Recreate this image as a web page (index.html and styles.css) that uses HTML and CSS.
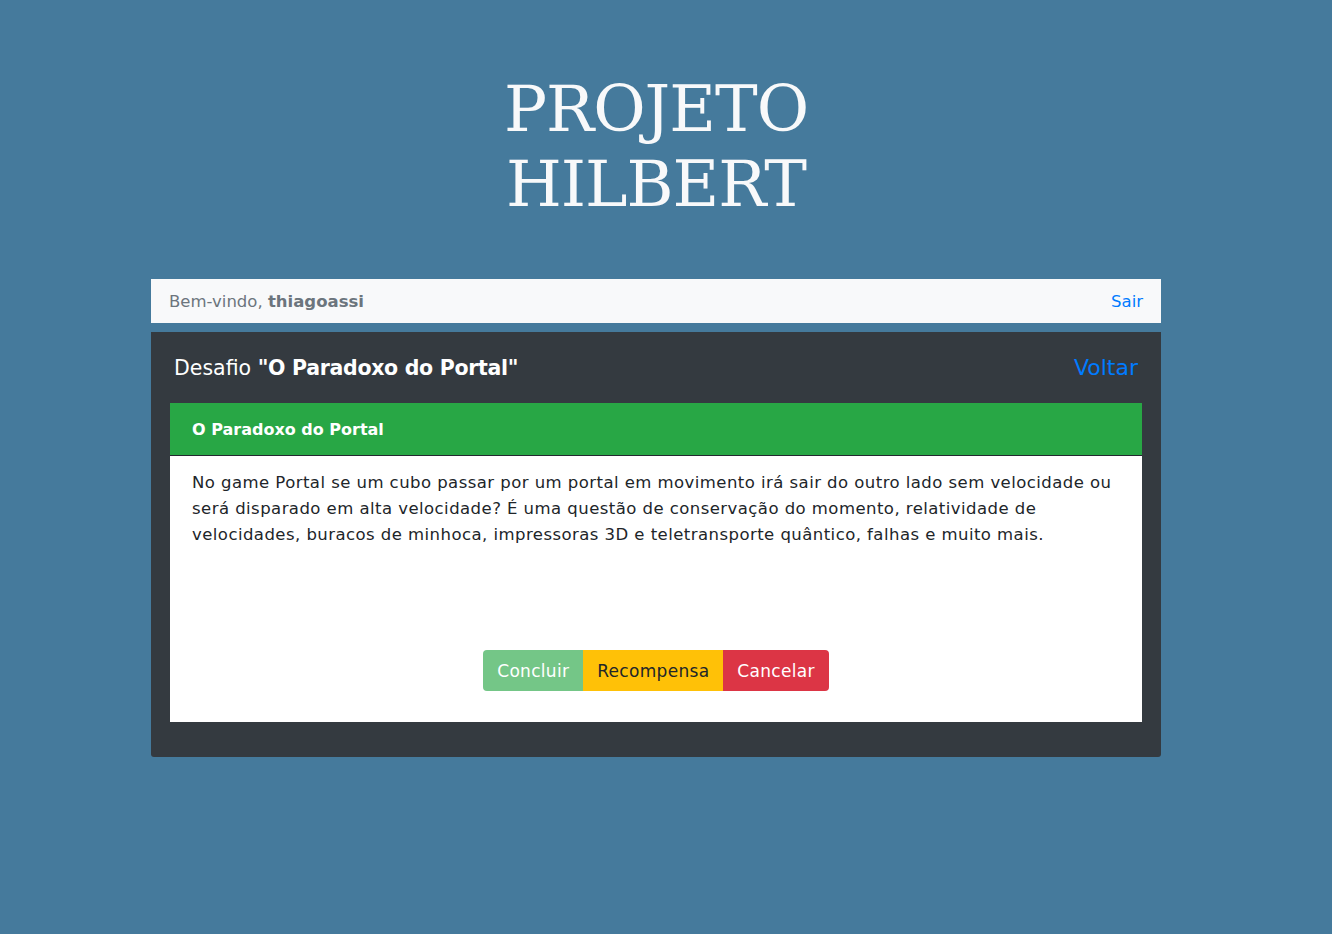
FILE: index.html
```html
<!DOCTYPE html>
<html lang="pt-BR">
<head>
<meta charset="utf-8">
<title>Projeto Hilbert</title>
<link rel="stylesheet" href="styles.css">
</head>
<body>
<header class="brand">
  <h1 class="brand-title">PROJETO<br>HILBERT</h1>
</header>
<main class="wrap">
  <nav class="userbar">
    <span class="welcome">Bem-vindo, <strong>thiagoassi</strong></span>
    <a class="link" href="#">Sair</a>
  </nav>
  <section class="panel">
    <div class="panel-head">
      <h2 class="panel-title">Desafio <strong>"O Paradoxo do Portal"</strong></h2>
      <a class="link link-lg" href="#">Voltar</a>
    </div>
    <article class="card">
      <div class="card-head">O Paradoxo do Portal</div>
      <div class="card-body">
        <p class="card-text">No game Portal se um cubo passar por um portal em movimento irá sair do outro lado sem velocidade ou será disparado em alta velocidade? É uma questão de conservação do momento, relatividade de velocidades, buracos de minhoca, impressoras 3D e teletransporte quântico, falhas e muito mais.</p>
        <div class="btn-group">
          <button class="btn btn-success" disabled>Concluir</button>
          <button class="btn btn-warning">Recompensa</button>
          <button class="btn btn-danger">Cancelar</button>
        </div>
      </div>
    </article>
  </section>
</main>
</body>
</html>
```
FILE: styles.css
```css
* { box-sizing: border-box; }
html, body { margin: 0; padding: 0; }
body {
  background: #457a9c;
  font-family: "DejaVu Sans", "Noto Sans", sans-serif;
  color: #212529;
  min-height: 934px;
  width: 1312px;
}
.brand {
  display: flex;
  justify-content: center;
  padding-top: 72px;
}
.brand-title {
  margin: 0;
  font-family: "DejaVu Serif", "Liberation Serif", serif;
  font-weight: normal;
  font-size: 64px;
  line-height: 75px;
  color: #f8f9fa;
  text-align: center;
  letter-spacing: -1px;
}
.wrap {
  width: 1010px;
  margin: 57px 0 0 151px;
}
.userbar {
  height: 44px;
  background: #f8f9fa;
  display: flex;
  align-items: center;
  justify-content: space-between;
  padding: 0 18px;
  font-size: 16.5px;
}
.welcome { color: #6c757d; }
.welcome strong { font-weight: bold; }
.link {
  color: #007bff;
  text-decoration: none;
}
.panel {
  margin-top: 9px;
  background: #343a40;
  border-radius: 0 0 3px 3px;
  padding: 0 19px 35px;
}
.panel-head {
  height: 71px;
  display: flex;
  align-items: center;
  justify-content: space-between;
  padding: 0 4px;
}
.panel-title {
  margin: 0;
  font-size: 20.5px;
  font-weight: normal;
  color: #fff;
}
.panel-title strong { font-weight: bold; letter-spacing: -0.3px; }
.link-lg { font-size: 22px; }
.card {
  background: #fff;
}
.card-head {
  height: 53px;
  background: #28a745;
  border-bottom: 1px solid #23292f;
  color: #fff;
  font-weight: bold;
  font-size: 16px;
  display: flex;
  align-items: center;
  padding: 0 22px;
}
.card-body {
  padding: 14px 22px 31px;
  display: flex;
  flex-direction: column;
  align-items: center;
}
.card-text {
  margin: 0;
  align-self: stretch;
  font-size: 16.5px;
  letter-spacing: 0.45px;
  line-height: 26px;
  color: #212529;
}
.btn-group {
  margin-top: 102px;
  display: flex;
}
.btn {
  height: 41px;
  border: 0;
  font-family: inherit;
  font-size: 17px;
  letter-spacing: 0.3px;
  padding: 0 14px;
  cursor: pointer;
}
.btn-success {
  background: #74c687;
  color: #fff;
  border-radius: 4px 0 0 4px;
}
.btn-warning {
  background: #ffc107;
  color: #212529;
}
.btn-danger {
  background: #dc3545;
  color: #fff;
  border-radius: 0 4px 4px 0;
}
```
